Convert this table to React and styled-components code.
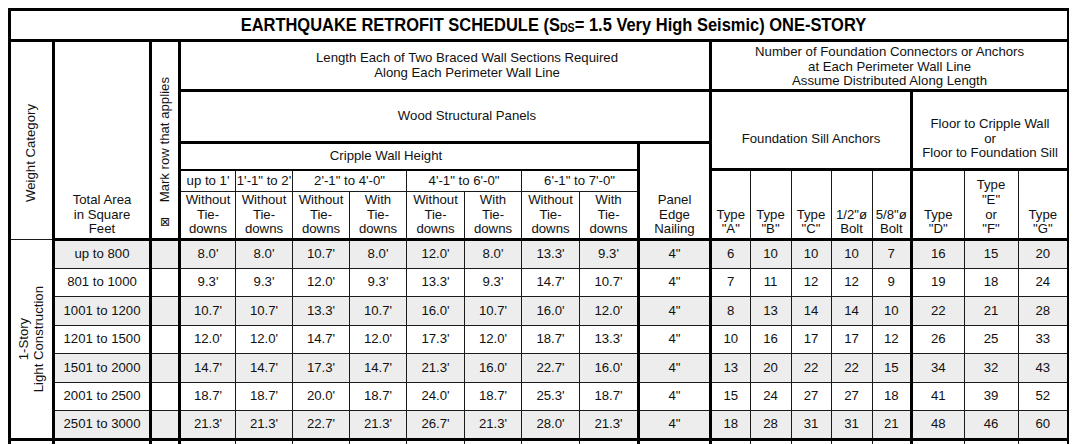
import React from 'react'
import styled, { createGlobalStyle } from 'styled-components';

const GlobalStyle = createGlobalStyle`
  body {
    margin: 8px;
    background: #fff;
    font-family: "Liberation Sans", Arial, sans-serif;
    overflow: hidden;
  }
`;

const THICK = '3px solid #000';
const THIN = '1px solid #1a1a1a';

const Table = styled.table`
  width: 1062px;
  table-layout: fixed;
  border-collapse: collapse;
  border: ${THICK};
  font-size: 13.2px;
  line-height: 14.7px;
  color: #111;
`;

const Row = styled.tr`
  height: ${({ $h }) => $h}px;
`;

const Cell = styled.td`
  border: ${THIN};
  border-left: ${({ $l }) => ($l ? THICK : THIN)};
  border-right: ${({ $r }) => ($r ? THICK : THIN)};
  border-bottom: ${({ $b }) => ($b === 2 ? '2px solid #000' : $b ? THICK : THIN)};
  padding: 0;
  text-align: center;
  vertical-align: ${({ $va }) => $va || 'middle'};
  background: ${({ $shade }) => ($shade ? '#ededed' : '#fff')};
  white-space: nowrap;
  overflow: hidden;
`;

const HeadCell = styled(Cell).attrs({ as: 'th' })`
  font-weight: normal;
  padding-bottom: ${({ $pb }) => $pb || 0}px;
  padding-top: ${({ $pt }) => $pt || 0}px;
  padding-left: ${({ $pl }) => $pl || 0}px;
  padding-right: ${({ $pr }) => $pr || 0}px;
`;

const Title = styled.th`
  border-bottom: ${THICK};
  padding: 3px 0 0 28px;
  color: #000;
`;

const TitleText = styled.span`
  display: inline-block;
  font-family: "Liberation Sans", Arial, sans-serif;
  font-weight: bold;
  font-size: 18.5px;
  line-height: 22px;
  transform: scaleX(0.89);
  transform-origin: center;
`;

const Sub = styled.span`
  font-size: 12px;
  vertical-align: -1px;
`;

const Vertical = styled.div`
  writing-mode: vertical-rl;
  transform: rotate(180deg);
  margin: 0 auto;
  white-space: nowrap;
`;

const MarkStack = styled.div`
  height: 196px;
  display: flex;
  flex-direction: column;
  align-items: center;
  justify-content: flex-end;
  gap: 14px;
  padding-bottom: 10px;
  box-sizing: border-box;
`;

const Box = styled.span`
  font-family: "DejaVu Sans", sans-serif;
  font-size: 12px;
  line-height: 12px;
`;

const colWidths = [44, 97, 29, 56, 57, 57, 57, 58, 57, 58, 59, 72, 39.5, 41, 40, 41, 39.5, 52.5, 54, 50.5];
// thick border after these column indexes
const thickAfter = new Set([0, 1, 2, 10, 11, 16]);

const data = [
  ['up to 800', "8.0'", "8.0'", "10.7'", "8.0'", "12.0'", "8.0'", "13.3'", "9.3'", '4"', 6, 10, 10, 10, 7, 16, 15, 20],
  ['801 to 1000', "9.3'", "9.3'", "12.0'", "9.3'", "13.3'", "9.3'", "14.7'", "10.7'", '4"', 7, 11, 12, 12, 9, 19, 18, 24],
  ['1001 to 1200', "10.7'", "10.7'", "13.3'", "10.7'", "16.0'", "10.7'", "16.0'", "12.0'", '4"', 8, 13, 14, 14, 10, 22, 21, 28],
  ['1201 to 1500', "12.0'", "12.0'", "14.7'", "12.0'", "17.3'", "12.0'", "18.7'", "13.3'", '4"', 10, 16, 17, 17, 12, 26, 25, 33],
  ['1501 to 2000', "14.7'", "14.7'", "17.3'", "14.7'", "21.3'", "16.0'", "22.7'", "16.0'", '4"', 13, 20, 22, 22, 15, 34, 32, 43],
  ['2001 to 2500', "18.7'", "18.7'", "20.0'", "18.7'", "24.0'", "18.7'", "25.3'", "18.7'", '4"', 15, 24, 27, 27, 18, 41, 39, 52],
  ['2501 to 3000', "21.3'", "21.3'", "22.7'", "21.3'", "26.7'", "21.3'", "28.0'", "21.3'", '4"', 18, 28, 31, 31, 21, 48, 46, 60],
];

const types = [
  ['Type', '"A"'], ['Type', '"B"'], ['Type', '"C"'], ['1/2"ø', 'Bolt'], ['5/8"ø', 'Bolt'],
  ['Type', '"D"'], ['Type', '"E"', 'or', '"F"'], ['Type', '"G"'],
];

const lines = (arr) => arr.map((t, i) => (
  <React.Fragment key={i}>{i > 0 && <br />}{t}</React.Fragment>
));

const App = () => {
  const tieDowns = ['Without', 'Without', 'Without', 'With', 'Without', 'With', 'Without', 'With'];
  return (
    <>
      <GlobalStyle />
      <Table>
        <colgroup>
          {colWidths.map((w, i) => <col key={i} style={{ width: w }} />)}
        </colgroup>
        <thead>
          <Row $h={31}>
            <Title colSpan={20}>
              <TitleText>EARTHQUAKE RETROFIT SCHEDULE (S<Sub>DS</Sub>= 1.5 Very High Seismic) ONE-STORY</TitleText>
            </Title>
          </Row>
          <Row $h={49}>
            <HeadCell rowSpan={5} $r $pt={24}><Vertical>Weight Category</Vertical></HeadCell>
            <HeadCell rowSpan={5} $r $b $va="bottom" $pb={1}>{lines(['Total Area', 'in Square', 'Feet'])}</HeadCell>
            <HeadCell rowSpan={5} $r $b $va="bottom">
              <MarkStack>
                <Vertical>Mark row that applies</Vertical>
                <Box>⊠</Box>
              </MarkStack>
            </HeadCell>
            <HeadCell colSpan={9} $r $b $pl={44}>
              {lines(['Length Each of Two Braced Wall Sections Required', 'Along Each Perimeter Wall Line'])}
            </HeadCell>
            <HeadCell colSpan={8} $b $pt={3}>
              {lines(['Number of Foundation Connectors or Anchors', 'at Each Perimeter Wall Line', 'Assume Distributed Along Length'])}
            </HeadCell>
          </Row>
          <Row $h={52}>
            <HeadCell colSpan={9} $r $b $pl={44}>Wood Structural Panels</HeadCell>
            <HeadCell colSpan={5} rowSpan={2} $r $b $pt={18}>Foundation Sill Anchors</HeadCell>
            <HeadCell colSpan={3} rowSpan={2} $b $pt={18}>
              {lines(['Floor to Cripple Wall', 'or', 'Floor to Foundation Sill'])}
            </HeadCell>
          </Row>
          <Row $h={27}>
            <HeadCell colSpan={8} $r $b={2} $pr={46}>Cripple Wall Height</HeadCell>
            <HeadCell rowSpan={3} $r $b $va="bottom" $pb={1}>{lines(['Panel', 'Edge', 'Nailing'])}</HeadCell>
          </Row>
          <Row $h={22}>
            <HeadCell>up to 1'</HeadCell>
            <HeadCell>1'-1" to 2'</HeadCell>
            <HeadCell colSpan={2}>2'-1" to 4'-0"</HeadCell>
            <HeadCell colSpan={2}>4'-1" to 6'-0"</HeadCell>
            <HeadCell colSpan={2} $r>6'-1" to 7'-0"</HeadCell>
            {types.map((t, i) => (
              <HeadCell key={i} rowSpan={2} $b $r={i === 4} $va="bottom" $pb={1}>{lines(t)}</HeadCell>
            ))}
          </Row>
          <Row $h={48}>
            {tieDowns.map((w, i) => (
              <HeadCell key={i} $b $r={i === 7} $va="bottom" $pb={1}>{lines([w, 'Tie-', 'downs'])}</HeadCell>
            ))}
          </Row>
        </thead>
        <tbody>
          {data.map((row, r) => (
            <Row key={r} $h={28.5}>
              {r === 0 && (
                <Cell rowSpan={7} $r $b><Vertical>{lines(['1-Story', 'Light Construction'])}</Vertical></Cell>
              )}
              {row.map((v, c) => {
                const col = c === 0 ? 1 : c + 2;
                return (
                  <React.Fragment key={c}>
                    <Cell $shade={r % 2 === 0} $r={thickAfter.has(col)} $b={r === 6}>{v}</Cell>
                    {c === 0 && <Cell $shade={r % 2 === 0} $r $b={r === 6} />}
                  </React.Fragment>
                );
              })}
            </Row>
          ))}
          <Row $h={28.5}>
            {colWidths.map((_, i) => <Cell key={i} $r={thickAfter.has(i)} />)}
          </Row>
        </tbody>
      </Table>
    </>
  )
}

export default App
